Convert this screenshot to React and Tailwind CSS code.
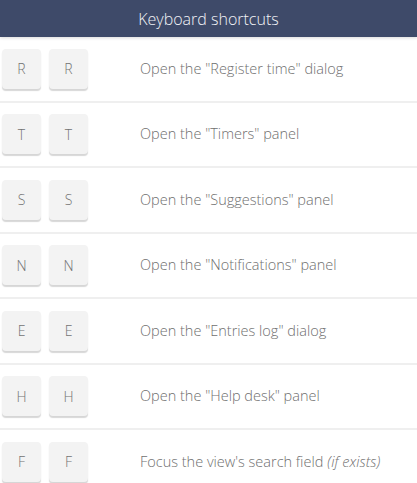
const shortcuts = [
  { key: 'R', text: 'Open the "Register time" dialog' },
  { key: 'T', text: 'Open the "Timers" panel' },
  { key: 'S', text: 'Open the "Suggestions" panel' },
  { key: 'N', text: 'Open the "Notifications" panel' },
  { key: 'E', text: 'Open the "Entries log" dialog' },
  { key: 'H', text: 'Open the "Help desk" panel' },
  { key: 'F', text: "Focus the view's search field", note: '(if exists)' },
];

function Key({ children }) {
  return (
    <span className="flex h-10 w-[39px] items-center justify-center rounded-[4px] bg-[#f3f3f3] text-[14px] font-light text-[#727272] shadow-[0_2px_1px_rgba(0,0,0,0.16)]">
      {children}
    </span>
  );
}

export default function App() {
  return (
    <div className="h-[483px] w-[417px] overflow-hidden bg-white font-['Open_Sans',sans-serif]">
      <div className="relative z-10 flex h-[37px] items-center justify-center bg-[#3e4a69] text-[16px] font-light text-[#f2f3f7] shadow-[0_1px_3px_rgba(0,0,0,0.15)]">
        Keyboard shortcuts
      </div>
      <ul>
        {shortcuts.map((s) => (
          <li
            key={s.key}
            className="flex h-[65.5px] items-center border-b-2 border-[#efefef] pl-[2px]"
          >
            <div className="flex w-[138px] gap-2">
              <Key>{s.key}</Key>
              <Key>{s.key}</Key>
            </div>
            <span className="text-[14.5px] font-light text-[#6f6f6f]">
              {s.text}
              {s.note && <i className="ml-1">{s.note}</i>}
            </span>
          </li>
        ))}
      </ul>
    </div>
  );
}
